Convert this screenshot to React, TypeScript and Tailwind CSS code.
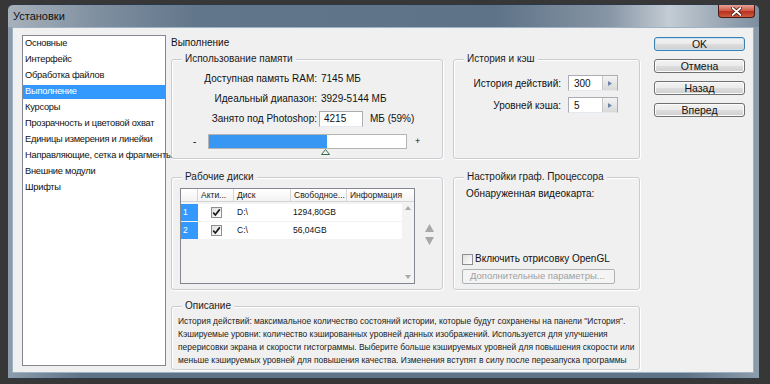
import React from "react";

function Group({
  title,
  className = "",
  children,
}: {
  title: string;
  className?: string;
  children?: React.ReactNode;
}) {
  return (
    <div
      className={`relative rounded-[3px] border border-[#c9cdd1] shadow-[inset_1px_1px_0_#ffffff,1px_1px_0_#ffffff] ${className}`}
    >
      <span className="absolute left-[10px] top-[-8px] whitespace-nowrap bg-[#f0f0f0] px-[3px] text-[10px] leading-[14px] text-[#1a1a1a]">
        {title}
      </span>
      {children}
    </div>
  );
}

function Check({ checked = true }: { checked?: boolean }) {
  return (
    <div className="flex h-[11px] w-[11px] shrink-0 items-center justify-center border border-[#8e8f8f] bg-gradient-to-br from-[#e0e0e0] to-[#ffffff]">
      {checked && (
        <svg width="9" height="9" viewBox="0 0 9 9">
          <path d="M1.2 4.6 L3.4 7 L7.8 1.4" fill="none" stroke="#1b1b1b" strokeWidth="1.7" />
        </svg>
      )}
    </div>
  );
}

function Spin({ value }: { value: string }) {
  return (
    <div className="flex h-[16px] w-[50px] border border-[#abadb3] border-b-[#e3e9ef] bg-white">
      <div className="flex flex-1 items-center pl-[5px] text-[10px]">{value}</div>
      <div className="flex w-[15px] items-center justify-center border-l border-[#c8c8c8] bg-gradient-to-b from-[#f4f4f4] to-[#d9d9d9]">
        <svg width="4" height="5" viewBox="0 0 4 5">
          <path d="M0 0 L4 2.5 L0 5 Z" fill="#6a86a8" />
        </svg>
      </div>
    </div>
  );
}

function WinButton({ label, primary = false }: { label: string; primary?: boolean }) {
  return (
    <div
      className={`flex h-[14px] w-[91px] items-center justify-center rounded-[3px] border ${
        primary ? "border-[#3c7fb1] shadow-[inset_0_0_0_1px_#c2e4f6]" : "border-[#707070] shadow-[inset_0_0_0_1px_#fbfbfb]"
      } bg-[linear-gradient(to_bottom,#f2f2f2_0%,#ebebeb_48%,#dddddd_52%,#cfcfcf_100%)] text-[10.5px] leading-none text-[#111]`}
    >
      {label}
    </div>
  );
}

const menu = [
  "Основные",
  "Интерфейс",
  "Обработка файлов",
  "Выполнение",
  "Курсоры",
  "Прозрачность и цветовой охват",
  "Единицы измерения и линейки",
  "Направляющие, сетка и фрагменты",
  "Внешние модули",
  "Шрифты",
];

export default function App() {
  return (
    <div className="h-[384px] w-[770px] overflow-hidden bg-[#373737] pl-[7px] pt-[4px] font-['Liberation_Sans',Arial,sans-serif] text-black">
      {/* Window */}
      <div className="flex h-[375px] w-[753px] flex-col rounded-t-[6px] border border-[#2c3845] bg-[linear-gradient(to_right,#a7b1bb_0%,#7f8fa0_12%,#62768b_25%,#5e7388_65%,#8795a4_80%,#c3ccd4_88%,#7d8e9f_100%)]">
        {/* Title bar */}
        <div className="flex h-[22px] items-start justify-between">
          <div className="pl-[5px] pt-[4px] text-[11px] leading-[14px] text-[#101010]">Установки</div>
          <div className="mr-[4px] flex h-[13px] w-[37px] items-center justify-center rounded-b-[4px] border border-t-0 border-[#4a1a14] bg-[linear-gradient(to_bottom,#e6a093_0%,#d0604d_45%,#b8311d_55%,#cc5a3f_100%)]">
            <svg width="11" height="9" viewBox="0 0 11 9">
              <path d="M1.5 1 L9.5 8 M9.5 1 L1.5 8" stroke="#3b1510" strokeWidth="3.4" strokeLinecap="round" />
              <path d="M1.5 1 L9.5 8 M9.5 1 L1.5 8" stroke="#ffffff" strokeWidth="1.8" strokeLinecap="round" />
            </svg>
          </div>
        </div>
        {/* Client area frame */}
        <div className="flex flex-1 bg-[linear-gradient(to_right,#8d9cab,#5f7388_10%,#5f7388_90%,#8d9cab)] px-[4px] pb-[5px]">
          <div className="flex h-[346px] w-[742px] border border-[#9fb2c4] bg-[#f0f0f0]">
            {/* Left list */}
            <div className="ml-[9px] mt-[7px] h-[331px] w-[144px] border border-[#828790] bg-white pt-[1px]">
              <div className="flex flex-col gap-[2px]">
                {menu.map((m) => (
                  <div
                    key={m}
                    className={`flex h-[14px] items-center whitespace-nowrap pl-[2px] text-[9.3px] leading-none tracking-[-0.25px] ${
                      m === "Выполнение" ? "bg-[#3399ff] text-white" : "text-[#111]"
                    }`}
                  >
                    {m}
                  </div>
                ))}
              </div>
            </div>

            {/* Middle */}
            <div className="ml-[5px] flex w-[469px] flex-col pt-[8px]">
              <div className="h-[14px] text-[10px] leading-[14px] text-[#111]">Выполнение</div>

              {/* Row 1 */}
              <div className="mt-[9px] flex gap-[10px]">
                <Group title="Использование памяти" className="h-[100px] w-[272px]">
                  <div className="flex flex-col whitespace-nowrap pt-[8px] text-[10px] text-[#111]">
                    <div className="flex h-[20px] items-center">
                      <div className="w-[145px] text-right">Доступная память RAM:</div>
                      <div className="ml-[4px]">7145 МБ</div>
                    </div>
                    <div className="flex h-[20px] items-center">
                      <div className="w-[145px] text-right">Идеальный диапазон:</div>
                      <div className="ml-[4px]">3929-5144 МБ</div>
                    </div>
                    <div className="flex h-[21px] items-center">
                      <div className="w-[145px] text-right">Занято под Photoshop:</div>
                      <div className="ml-[2px] flex h-[16px] w-[44px] items-center border border-[#abadb3] border-b-[#e3e9ef] bg-white pl-[4px]">
                        4215
                      </div>
                      <div className="ml-[7px]">МБ (59%)</div>
                    </div>
                    <div className="mt-[5px] flex items-start pl-[21px]">
                      <div className="w-[15px] leading-[15px]">-</div>
                      <div className="relative">
                        <div className="flex h-[15px] w-[199px] border border-[#b4b4b4] bg-white">
                          <div className="h-full w-[118px] bg-[#3797f3]" />
                        </div>
                        <svg
                          className="absolute left-[113px] top-[15px]"
                          width="9"
                          height="6"
                          viewBox="0 0 9 6"
                        >
                          <path d="M4.5 0.5 L8.5 5.5 L0.5 5.5 Z" fill="#f4f4f4" stroke="#3d6b46" strokeWidth="1" />
                        </svg>
                      </div>
                      <div className="ml-[8px] text-[9px] leading-[15px]">+</div>
                    </div>
                  </div>
                </Group>

                <Group title="История и кэш" className="h-[100px] w-[187px]">
                  <div className="flex flex-col gap-[6px] whitespace-nowrap pt-[15px] text-[10px] text-[#111]">
                    <div className="flex items-center">
                      <div className="w-[107px] text-right">История действий:</div>
                      <div className="ml-[7px]">
                        <Spin value="300" />
                      </div>
                    </div>
                    <div className="flex items-center">
                      <div className="w-[107px] text-right">Уровней кэша:</div>
                      <div className="ml-[7px]">
                        <Spin value="5" />
                      </div>
                    </div>
                  </div>
                </Group>
              </div>

              {/* Row 2 */}
              <div className="mt-[18px] flex gap-[10px]">
                <Group title="Рабочие диски" className="h-[113px] w-[272px]">
                  <div className="flex items-start pl-[8px] pt-[10px]">
                    <div className="flex h-[96px] w-[235px] flex-col border border-[#828790] bg-[#f3f3f3]">
                      {/* header */}
                      <div className="flex h-[13px] whitespace-nowrap border-b border-[#d5d5d5] bg-gradient-to-b from-white to-[#f3f3f3] text-[8.5px] leading-[12px] text-[#222]">
                        <div className="w-[17px] border-r border-[#d5d5d5]" />
                        <div className="w-[36px] border-r border-[#d5d5d5] pl-[3px]">Акти...</div>
                        <div className="w-[57px] border-r border-[#d5d5d5] pl-[3px]">Диск</div>
                        <div className="w-[56px] border-r border-[#d5d5d5] pl-[3px]">Свободное...</div>
                        <div className="flex-1 pl-[3px]">Информация</div>
                      </div>
                      <div className="flex flex-1">
                        <div className="flex flex-1 flex-col gap-[1px] pt-[2px]">
                          {[
                            ["1", "D:\\", "1294,80GB"],
                            ["2", "C:\\", "56,04GB"],
                          ].map(([n, d, f]) => (
                            <div key={n} className="flex h-[17px] items-center bg-white text-[8.5px] text-[#111]">
                              <div className="flex h-full w-[17px] items-center bg-[#3399ff] pl-[2px] text-white">{n}</div>
                              <div className="flex w-[36px] justify-center">
                                <Check />
                              </div>
                              <div className="w-[57px] pl-[3px]">{d}</div>
                              <div className="w-[56px] pl-[2px]">{f}</div>
                            </div>
                          ))}
                        </div>
                        <div className="flex w-[12px] flex-col items-center justify-between py-[4px]">
                          <svg width="6" height="4" viewBox="0 0 6 4">
                            <path d="M0 4 L3 0 L6 4 Z" fill="#a9a9a9" />
                          </svg>
                          <svg width="6" height="4" viewBox="0 0 6 4">
                            <path d="M0 0 L3 4 L6 0 Z" fill="#a9a9a9" />
                          </svg>
                        </div>
                      </div>
                    </div>
                    <div className="ml-[10px] mt-[36px] flex flex-col gap-[5px]">
                      <svg width="9" height="8" viewBox="0 0 9 8">
                        <path d="M0 8 L4.5 0 L9 8 Z" fill="#a8a8a8" />
                      </svg>
                      <svg width="9" height="8" viewBox="0 0 9 8">
                        <path d="M0 0 L4.5 8 L9 0 Z" fill="#a8a8a8" />
                      </svg>
                    </div>
                  </div>
                </Group>

                <Group title="Настройки граф. Процессора" className="h-[113px] w-[187px]">
                  <div className="flex h-full flex-col whitespace-nowrap pb-[5px] pl-[8px] pt-[9px] text-[10px] text-[#111]">
                    <div className="pl-[4px] leading-[14px]">Обнаруженная видеокарта:</div>
                    <div className="flex-1" />
                    <div className="flex items-center gap-[2px]">
                      <Check checked={false} />
                      <div className="leading-[14px]">Включить отрисовку OpenGL</div>
                    </div>
                    <div className="mt-[3px] flex h-[15px] w-[153px] items-center rounded-[2px] border border-[#adb2b5] bg-[#f4f4f4] pl-[7px] text-[9.5px] text-[#a0a0a0]">
                      Дополнительные параметры...
                    </div>
                  </div>
                </Group>
              </div>

              {/* Description */}
              <Group title="Описание" className="mt-[16px] h-[64px] w-[469px]">
                <div className="whitespace-nowrap pl-[6px] pt-[8px] text-[8.45px] leading-[13px] text-[#222]">
                  <div>История действий: максимальное количество состояний истории, которые будут сохранены на панели "История".</div>
                  <div>Кэшируемые уровни: количество кэшированных уровней данных изображений. Используется для улучшения</div>
                  <div>перерисовки экрана и скорости гистограммы. Выберите больше кэшируемых уровней для повышения скорости или</div>
                  <div>меньше кэшируемых уровней для повышения качества. Изменения вступят в силу после перезапуска программы</div>
                </div>
              </Group>
            </div>

            {/* Buttons */}
            <div className="ml-[14px] flex flex-col gap-[8px] pt-[9px]">
              <WinButton label="OK" primary />
              <WinButton label="Отмена" />
              <WinButton label="Назад" />
              <WinButton label="Вперед" />
            </div>
          </div>
        </div>
      </div>
    </div>
  );
}
